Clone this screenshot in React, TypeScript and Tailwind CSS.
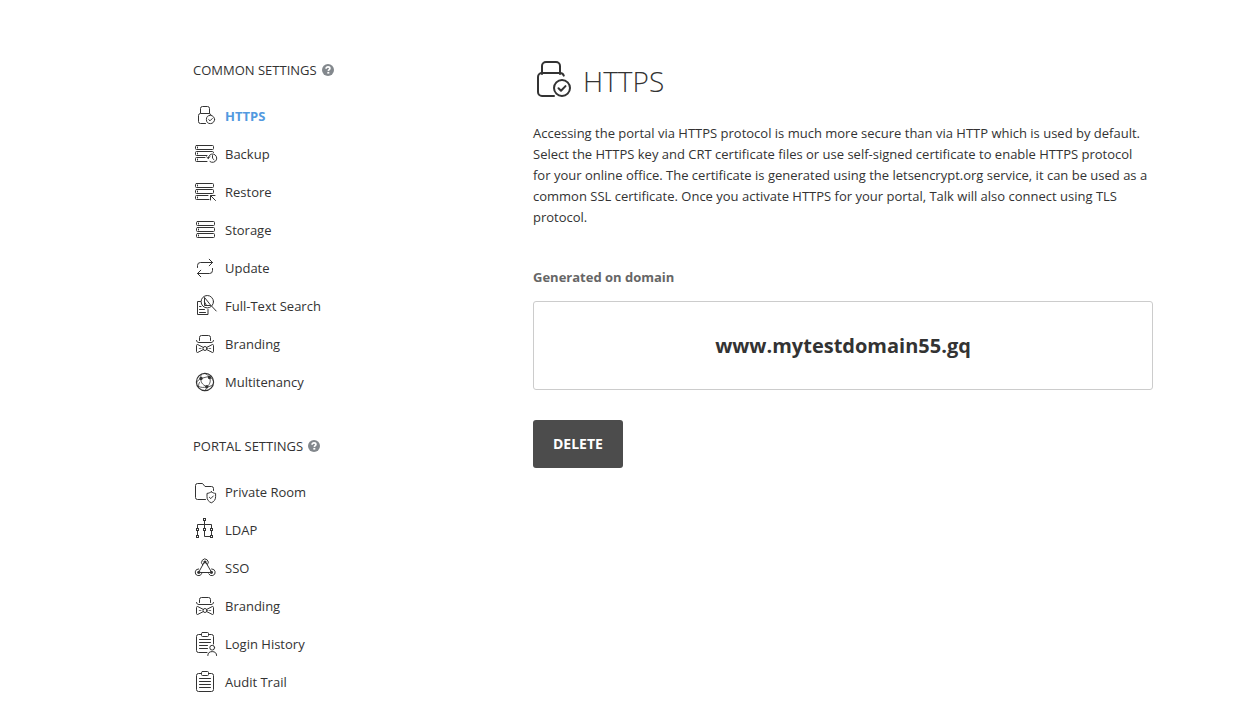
import type { ReactNode } from "react";

type IconProps = { children: ReactNode };

function Icon({ children }: IconProps) {
  return (
    <svg
      viewBox="0 0 24 24"
      className="size-6 shrink-0 overflow-visible"
      fill="none"
      stroke="#333"
      strokeWidth="1"
      strokeLinecap="round"
      strokeLinejoin="round"
      aria-hidden="true"
    >
      {children}
    </svg>
  );
}

const httpsIcon = (
  <Icon>
    <path d="M7.5 9V4.5a2 2 0 0 1 2-2h5a2 2 0 0 1 2 2V9" />
    <path d="M12.5 19.5h-5a2 2 0 0 1-2-2v-6a2 2 0 0 1 2-2h8.5a2 2 0 0 1 2 1.5" />
    <circle cx="17.5" cy="15.5" r="4.1" />
    <path d="M15.7 15.6l1.3 1.2 2.3-2.3" />
  </Icon>
);

const backupIcon = (
  <Icon>
    <rect x="2.5" y="3.5" width="18" height="4" rx="1" />
    <path d="M20.5 10.5a1 1 0 0 0-1-1h-16a1 1 0 0 0-1 1v2a1 1 0 0 0 1 1H14M12 15.5H3.5a1 1 0 0 0-1 1v2a1 1 0 0 0 1 1H14" />
    <path d="M4.5 5v1M4.5 11v1M4.5 17v1" />
    <path d="M15.3 16.4a4.2 4.2 0 1 1 1.7 3.2M13.6 14.9l1.7 1.6 1.5-1.8M19.5 13.6v2.7l1.5 1.4" />
  </Icon>
);

const restoreIcon = (
  <Icon>
    <rect x="2.5" y="3.5" width="18" height="4" rx="1" />
    <rect x="2.5" y="9.5" width="18" height="4" rx="1" />
    <path d="M15 15.5H3.5a1 1 0 0 0-1 1v2a1 1 0 0 0 1 1H16" />
    <path d="M4.5 5v1M4.5 11v1M4.5 17v1" />
    <path d="M22.5 20.5l-5-5M17.5 20v-4.5H22" />
  </Icon>
);

const storageIcon = (
  <Icon>
    <rect x="3.5" y="3.5" width="18" height="4" rx="1" />
    <rect x="3.5" y="9.5" width="18" height="4" rx="1" />
    <rect x="3.5" y="15.5" width="18" height="4" rx="1" />
    <path d="M5.5 5v1M5.5 11v1M5.5 17v1" />
  </Icon>
);

const updateIcon = (
  <Icon>
    <path d="M4.5 11.5v-2a3 3 0 0 1 3-3h12M16.2 3.2l3.3 3.3-3.3 3.3" />
    <path d="M19.5 12.5v2a3 3 0 0 1-3 3h-12M7.8 14.2l-3.3 3.3 3.3 3.3" />
  </Icon>
);

const searchIcon = (
  <Icon>
    <path d="M7.5 7.5h-3v13h10.5v-5" />
    <path d="M6.5 12.5H8M6.5 15.5h5M6.5 18.5h6" />
    <circle cx="14.3" cy="7.7" r="6.2" />
    <path d="M11.5 3.8v7.7h6zM11.5 8l2 3.5" />
    <path d="M18.8 12.3l4.4 4.7" />
  </Icon>
);

const brandingIcon = (
  <Icon>
    <path d="M6.5 8.5v-3a2 2 0 0 1 2-2h7a2 2 0 0 1 2 2v3" />
    <path d="M3.5 8.5c0 1.3 1.2 2 2.5 2h12c1.3 0 2.5-.7 2.5-2" />
    <circle cx="12" cy="16.5" r="2" />
    <path d="M10.3 15.4L5 12.7c-1-.5-1.5 0-1.5.8v6c0 .8.5 1.3 1.5.8l5.3-2.7M13.7 15.4l5.3-2.7c1-.5 1.5 0 1.5.8v6c0 .8-.5 1.3-1.5.8l-5.3-2.7" />
    <path d="M8 16.5H6.3M16 16.5h1.7" strokeWidth=".7" />
  </Icon>
);

const multitenancyIcon = (
  <Icon>
    <circle cx="12" cy="12" r="8.6" strokeWidth="1.2" />
    <path
      d="M8 8.5l7.5-2M8 8.5c-.5 3 .5 6 5.8 8.2M15.8 6.5c2.5 2.5 2 8-2 10.2M8 8.5c-2 .6-3.4 2-4.3 4M8 8.5c-.4-1.5-.3-2.8.4-4M15.8 6.5c-.8-1.4-2-2.4-3.8-3M15.8 6.5c2 .7 3.5 2 4.4 4M13.8 16.7c2.4.2 4.2-.5 5.6-2M13.8 16.7c-.1 1.5-.8 2.8-2 3.8M5.5 16.5c2.8 1.2 5.4 1.3 8.3.2M6.5 12.5c-.8 1.3-1.1 2.6-1 4"
      strokeWidth=".8"
    />
    <g fill="#333" stroke="none">
      <circle cx="8" cy="8.5" r="1.7" />
      <circle cx="16.5" cy="7.5" r="1.7" />
      <circle cx="13.8" cy="16.7" r="1.7" />
    </g>
  </Icon>
);

const privateRoomIcon = (
  <Icon>
    <path d="M12.5 19.5h-8a2 2 0 0 1-2-2v-12a2 2 0 0 1 2-2h5l2.5 3h6.5a2 2 0 0 1 2 2v2" />
    <path d="M18.3 11.8c1.4 1 2.8 1.5 4.3 1.6v3.3c0 3-1.5 4.9-4.3 6.1-2.8-1.2-4.3-3.1-4.3-6.1v-3.3c1.5-.1 2.9-.6 4.3-1.6z" />
    <path d="M16.4 17.3l1.4 1.3 2.5-2.6" />
  </Icon>
);

const ldapIcon = (
  <Icon>
    <path d="M11.5 2.5v8M4.5 10.5v-4h14v4M4.5 12.5v5M11.5 12.5v6h6M18.5 12.5v5" />
    <g strokeLinejoin="miter" fill="#fff">
      <rect x="10.5" y=".5" width="2" height="2" />
      <rect x="3.5" y="10.5" width="2" height="2" />
      <rect x="10.5" y="10.5" width="2" height="2" />
      <rect x="17.5" y="10.5" width="2" height="2" />
      <rect x="3.5" y="17.5" width="2" height="2" />
      <rect x="17.5" y="17.5" width="2" height="2" />
    </g>
  </Icon>
);

const ssoIcon = (
  <Icon>
    <path d="M9.6 8.9A3.4 3.4 0 1 1 14.6 8.5M5.6 12.9A3.4 3.4 0 1 0 8.8 17.5M18.6 12.9A3.4 3.4 0 1 1 15.7 17.8" />
    <path d="M10.8 7L6.6 14.6M13.2 7l4.5 7.8M7.5 16.5h9" />
    <g fill="#333" stroke="none">
      <circle cx="12" cy="6" r="1.6" />
      <circle cx="5.8" cy="16.3" r="1.6" />
      <circle cx="18.4" cy="16.3" r="1.6" />
    </g>
  </Icon>
);

const loginHistoryIcon = (
  <Icon>
    <path d="M8.5 2.5h-3a2 2 0 0 0-2 2v14a2 2 0 0 0 2 2H14M15.5 2.5h3a2 2 0 0 1 2 2V12" />
    <rect x="8.5" y=".5" width="7" height="4" rx="1" />
    <path d="M6.5 7.5h11M6.5 10.5h11M6.5 13.5h8M6.5 16.5h8" />
    <circle cx="19.2" cy="15.7" r="2.4" />
    <path d="M14.8 23.5c0-2.6 1.6-3.9 4.4-3.9s4.4 1.3 4.4 3.9" />
  </Icon>
);

const auditIcon = (
  <Icon>
    <path d="M8.5 3.5h-3a2 2 0 0 0-2 2v14a2 2 0 0 0 2 2h13a2 2 0 0 0 2-2v-14a2 2 0 0 0-2-2h-3" />
    <rect x="8.5" y="1.5" width="7" height="4" rx="1" />
    <path d="M6.5 8.5h11M6.5 11.5h11M6.5 14.5h11M6.5 17.5h11" />
  </Icon>
);

type Item = { label: string; icon: ReactNode; active?: boolean };

const commonItems: Item[] = [
  { label: "HTTPS", icon: httpsIcon, active: true },
  { label: "Backup", icon: backupIcon },
  { label: "Restore", icon: restoreIcon },
  { label: "Storage", icon: storageIcon },
  { label: "Update", icon: updateIcon },
  { label: "Full-Text Search", icon: searchIcon },
  { label: "Branding", icon: brandingIcon },
  { label: "Multitenancy", icon: multitenancyIcon },
];

const portalItems: Item[] = [
  { label: "Private Room", icon: privateRoomIcon },
  { label: "LDAP", icon: ldapIcon },
  { label: "SSO", icon: ssoIcon },
  { label: "Branding", icon: brandingIcon },
  { label: "Login History", icon: loginHistoryIcon },
  { label: "Audit Trail", icon: auditIcon },
];

function Section({ title, items }: { title: string; items: Item[] }) {
  return (
    <section className="flex flex-col gap-[17px]">
      <div className="flex h-5 items-center gap-[5px]">
        <h2>{title}</h2>
        <button type="button" aria-label={`Help: ${title}`} className="cursor-pointer">
          <svg viewBox="0 0 12 12" className="size-3" aria-hidden="true">
            <circle cx="6" cy="6" r="6" fill="#83888d" />
            <path
              d="M4.1 4.7c0-1.2.8-1.8 1.9-1.8s1.9.6 1.9 1.6c0 1.2-1.5 1.2-1.5 2.4"
              fill="none"
              stroke="#fff"
              strokeWidth="1.7"
            />
            <rect x="5.3" y="7.9" width="2" height="1.7" fill="#fff" />
          </svg>
        </button>
      </div>
      <ul>
        {items.map((item) => (
          <li key={item.label}>
            <a
              href="#"
              aria-current={item.active ? "page" : undefined}
              className={
                item.active
                  ? "flex h-[38px] items-center gap-2 font-bold text-[#5299e0]"
                  : "flex h-[38px] items-center gap-2"
              }
            >
              {item.icon}
              <span>{item.label}</span>
            </a>
          </li>
        ))}
      </ul>
    </section>
  );
}

export default function App() {
  return (
    <div className="flex min-h-screen bg-white pt-[60px] pr-[87px] pl-[193px] font-['Open_Sans',sans-serif] text-[13px] leading-5 text-[#333]">
      <nav aria-label="Settings" className="flex w-[340px] shrink-0 flex-col gap-[35px]">
        <Section title="COMMON SETTINGS" items={commonItems} />
        <Section title="PORTAL SETTINGS" items={portalItems} />
      </nav>
      <main className="min-w-0 flex-1">
        <div className="flex gap-2.5">
          <svg
            viewBox="0 0 40 44"
            className="h-11 w-10 shrink-0"
            fill="none"
            stroke="#333"
            strokeWidth="2"
            strokeLinecap="round"
            strokeLinejoin="round"
            aria-hidden="true"
          >
            <path d="M9 14V6a4 4 0 0 1 4-4h10a4 4 0 0 1 4 4v8" />
            <path d="M21 36H9a4 4 0 0 1-4-4V17a4 4 0 0 1 4-4h18a4 4 0 0 1 3.8 2.6" />
            <circle cx="29" cy="28" r="8" />
            <path d="M25.5 28.3l2.5 2.4 4.5-4.6" />
          </svg>
          <h1 className="text-[28px] leading-[42px] font-light">HTTPS</h1>
        </div>
        <p className="mt-[19px] leading-[21px]">
          Accessing the portal via HTTPS protocol is much more secure than via HTTP which is used by
          default. Select the HTTPS key and CRT certificate files or use self-signed certificate to
          enable HTTPS protocol for your online office. The certificate is generated using the
          letsencrypt.org service, it can be used as a common SSL certificate. Once you activate
          HTTPS for your portal, Talk will also connect using TLS protocol.
        </p>
        <h3 className="mt-[39px] font-bold text-[#666]">Generated on domain</h3>
        <div className="mt-3.5 rounded-[3px] border border-[#ccc] px-4 py-7 text-center text-xl leading-[31px] font-bold">
          www.mytestdomain55.gq
        </div>
        <button
          type="button"
          className="mt-[30px] h-12 cursor-pointer rounded-[3px] bg-[#4c4c4c] px-5 text-sm font-bold text-white"
        >
          DELETE
        </button>
      </main>
    </div>
  );
}
